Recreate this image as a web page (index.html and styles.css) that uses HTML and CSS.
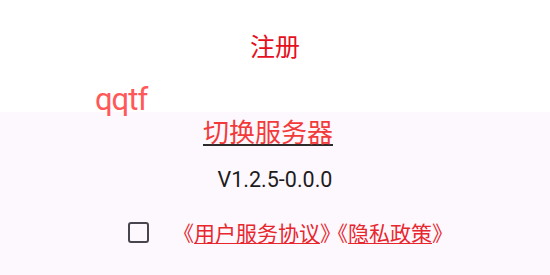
FILE: index.html
```html
<!DOCTYPE html>
<html lang="zh-CN">
<head>
<meta charset="utf-8">
<link rel="stylesheet" href="styles.css">
</head>
<body>
<div class="page">
  <header class="top">
    <h1 class="title">注册</h1>
  </header>
  <main class="content">
    <a class="switch">切换服务器</a>
    <div class="version">V1.2.5-0.0.0</div>
    <div class="agree">
      <span class="checkbox"></span>
      <span class="links"><span class="br open">《</span><a class="link">用户服务协议</a><span class="br close">》</span><span class="br open">《</span><a class="link">隐私政策</a><span class="br close">》</span></span>
    </div>
  </main>
  <div class="logo">qqtf</div>
</div>
</body>
</html>
```
FILE: styles.css
```css
html, body {
  margin: 0;
  padding: 0;
  background: #fdf8fd;
}
.page {
  position: relative;
  width: 550px;
  height: 275px;
  display: flex;
  flex-direction: column;
  font-family: "Noto Sans CJK SC", Roboto, sans-serif;
}
.top {
  height: 112px;
  background: #ffffff;
  display: flex;
  justify-content: center;
  padding-top: 33px;
  box-sizing: border-box;
}
.title {
  margin: 0;
  font-weight: 400;
  font-size: 25px;
  line-height: 25px;
  color: #e60f1e;
}
.content {
  flex: 1;
  display: flex;
  flex-direction: column;
  align-items: center;
  padding-top: 6px;
}
.switch {
  font-size: 26px;
  line-height: 26px;
  color: #f23a3a;
  text-decoration: underline;
  text-decoration-color: #2b2b2b;
  text-decoration-thickness: 1.5px;
  text-underline-offset: 2px;
  margin-right: 14px;
}
.version {
  margin-top: 25px;
  font-family: Roboto, sans-serif;
  font-size: 21.5px;
  line-height: 21px;
  color: #1d1b20;
}
.agree {
  margin-top: 32px;
  align-self: flex-start;
  margin-left: 128px;
  display: flex;
  align-items: center;
  gap: 31px;
}
.checkbox {
  width: 21px;
  height: 21px;
  box-sizing: border-box;
  border: 2.5px solid #49454f;
  border-radius: 3px;
}
.links {
  font-size: 21px;
  line-height: 21px;
  color: #e8262e;
  white-space: nowrap;
}
.br {
  font-feature-settings: "halt";
  display: inline-block;
  width: 14px;
}
.open {
  text-align: right;
}
.close {
  text-align: left;
}
.link {
  text-decoration: underline;
  text-decoration-thickness: 1px;
  text-underline-offset: 2px;
}
.logo {
  position: absolute;
  left: 95px;
  top: 82px;
  font-family: Roboto, sans-serif;
  font-size: 31px;
  line-height: 36px;
  letter-spacing: -1px;
  color: #ff5858;
}
```
